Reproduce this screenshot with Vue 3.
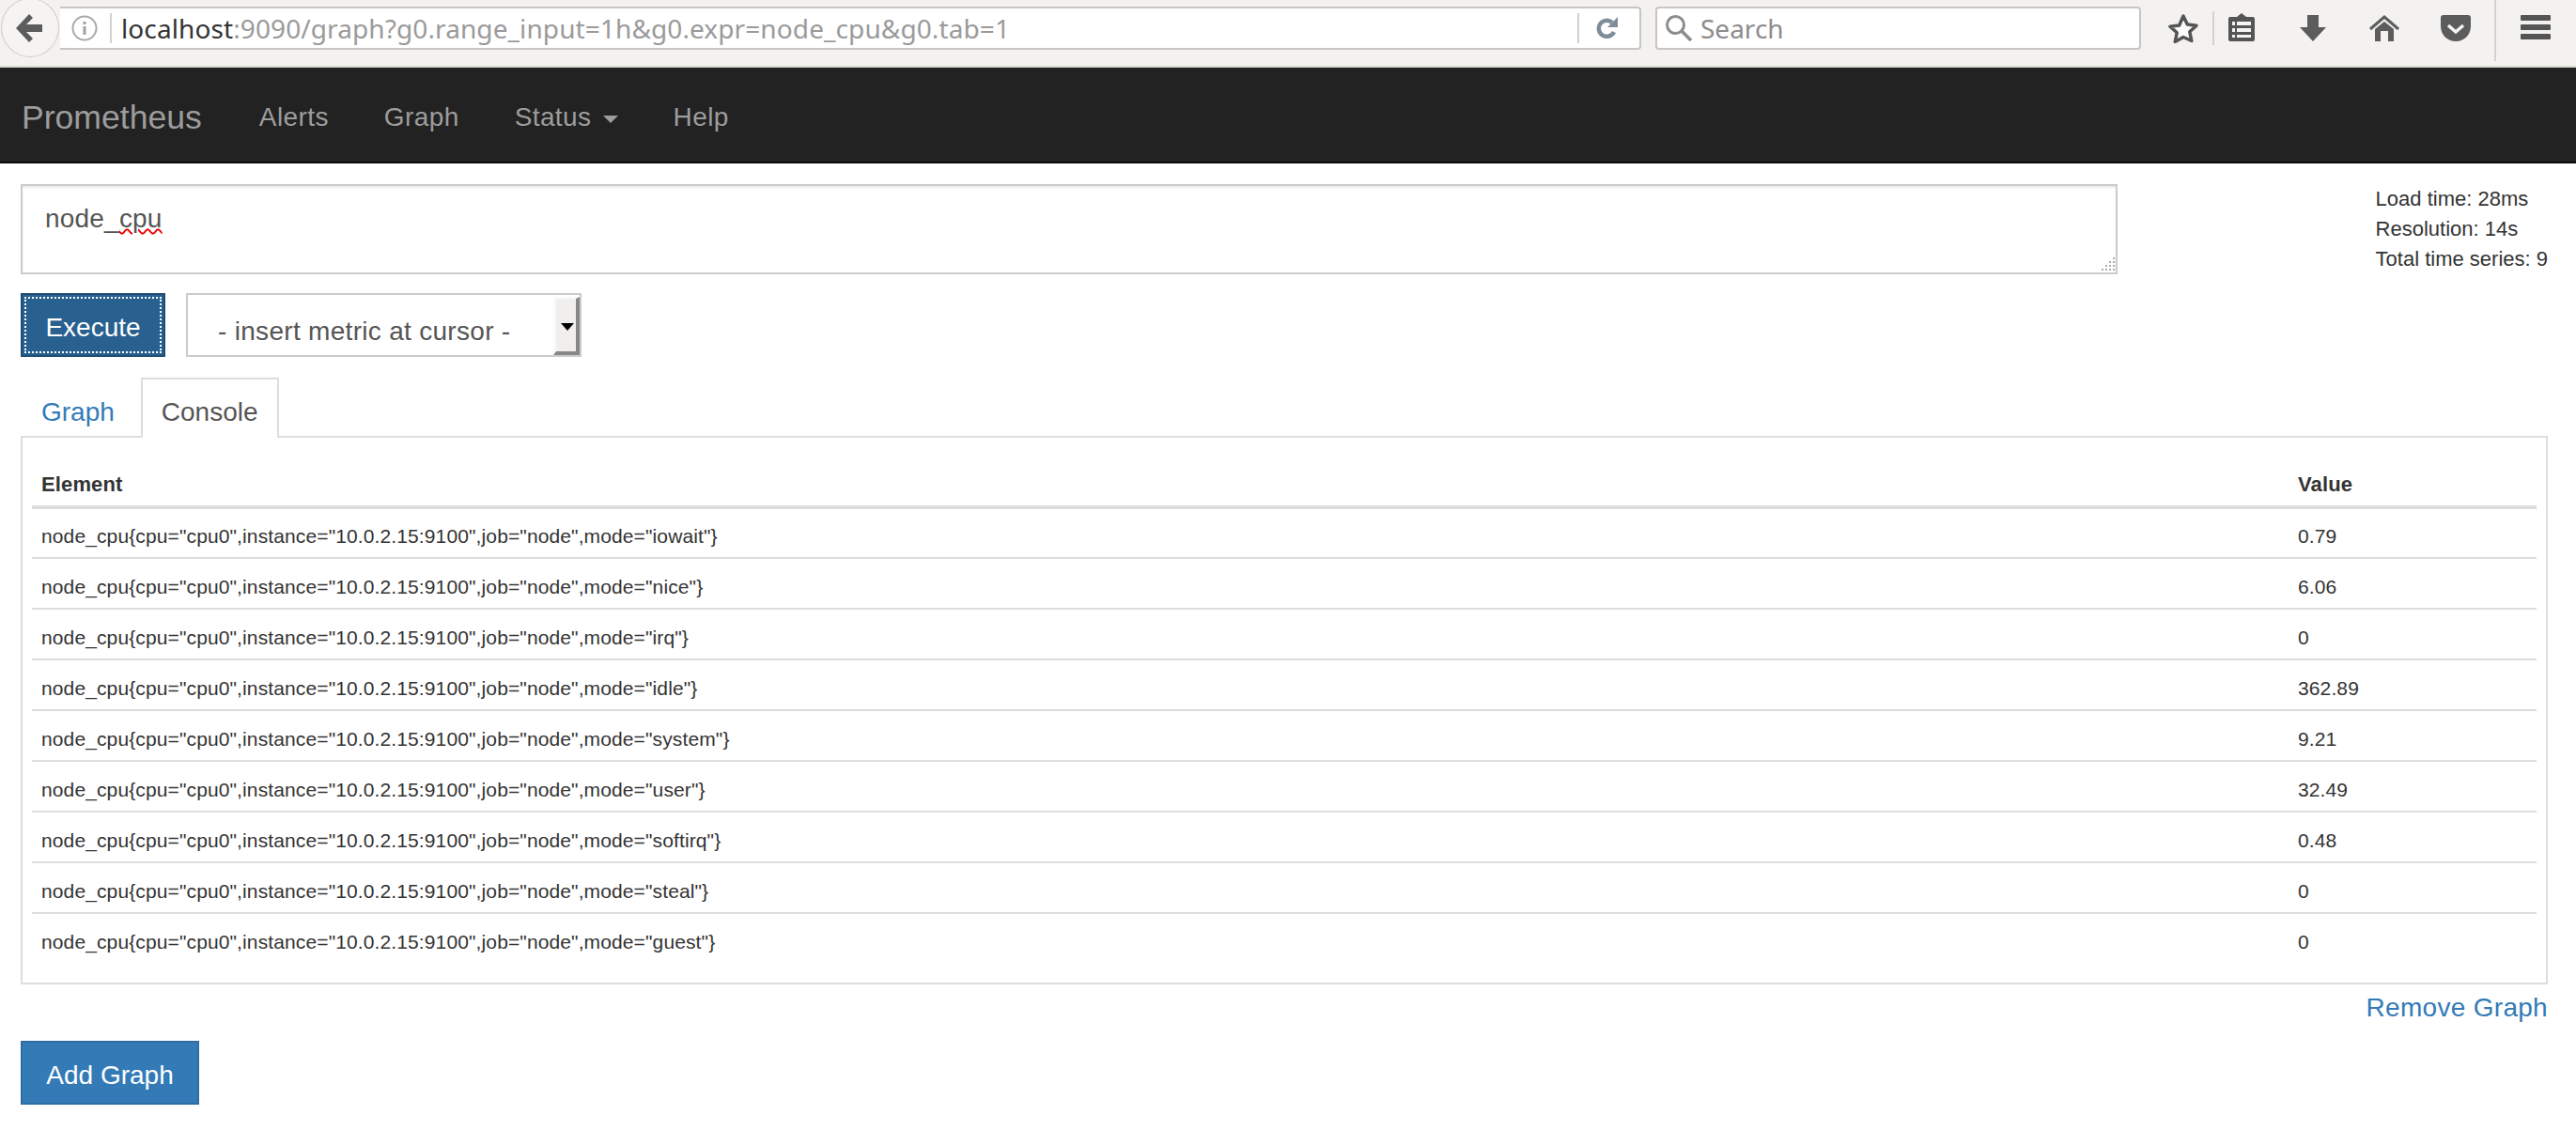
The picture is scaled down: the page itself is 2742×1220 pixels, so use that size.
<script setup>
const modes = [
  ['iowait', '0.79'], ['nice', '6.06'], ['irq', '0'], ['idle', '362.89'], ['system', '9.21'],
  ['user', '32.49'], ['softirq', '0.48'], ['steal', '0'], ['guest', '0']
]
const rows = modes.map(([mode, value]) => ({
  element: `node_cpu{cpu="cpu0",instance="10.0.2.15:9100",job="node",mode="${mode}"}`,
  value
}))
</script>

<template>
  <div class="page">
    <header class="toolbar">
      <div class="back">
        <svg width="28" height="30" viewBox="0 0 28 30"><path d="M14 0l4 4-7 7h17v8H11l7 7-4 4L0 15z" fill="#5c5c5c"/></svg>
      </div>
      <div class="urlbar">
        <svg class="info" width="28" height="28" viewBox="0 0 28 28">
          <circle cx="14" cy="14" r="12.5" fill="none" stroke="#a8a8a8" stroke-width="2"/>
          <rect x="12.5" y="12" width="3" height="9" fill="#a0a0a0"/>
          <rect x="12.5" y="7" width="3" height="3" fill="#a0a0a0"/>
        </svg>
        <span class="urlsep"></span>
        <span class="url"><span class="host">localhost</span>:9090/graph?g0.range_input=1h&amp;g0.expr=node_cpu&amp;g0.tab=1</span>
        <span class="urlsep end"></span>
        <svg class="reload" width="24" height="26" viewBox="0 0 24 26">
          <path d="M19 17a8.500 8.500 0 1 1-2-10" fill="none" stroke="#7f8c99" stroke-width="4.500"/>
          <path d="M23 1v11H12z" fill="#7f8c99"/>
        </svg>
      </div>
      <div class="searchbar">
        <svg width="30" height="30" viewBox="0 0 30 30">
          <circle cx="11.500" cy="11.500" r="9" fill="none" stroke="#8d8d8d" stroke-width="3"/>
          <path d="M18 18l10 10" stroke="#8d8d8d" stroke-width="3.500"/>
        </svg>
        <span class="search-text">Search</span>
      </div>
      <svg class="ti star" width="34" height="32" viewBox="0 0 34 32">
        <path d="M17 3l4.300 9 9.700 1.200-7.200 6.600 2 9.700L17 25.500 8.200 30.500l2-9.700L3 14.200 12.700 13z" fill="#fbfbfa" stroke="#555" stroke-width="3.500" stroke-linejoin="round"/>
      </svg>
      <span class="tsep"></span>
      <svg class="ti clip" width="28" height="30" viewBox="0 0 28 30">
        <path d="M2 4h7l5-4 5 4h7a2 2 0 0 1 2 2v22a2 2 0 0 1-2 2H2a2 2 0 0 1-2-2V6a2 2 0 0 1 2-2z" fill="#555"/>
        <path d="M9 9h15v4H9zM9 16h15v4H9zM9 23h15v3H9zM4 9h3v4H4zM4 16h3v4H4zM4 23h3v3H4z" fill="#f5f4f2"/>
      </svg>
      <svg class="ti down" width="28" height="28" viewBox="0 0 28 28"><path d="M8 0h12v13h8L14 28 0 13h8z" fill="#5c5c5c"/></svg>
      <svg class="ti home" width="32" height="28" viewBox="0 0 32 28">
        <path d="M1 15L16 2l15 13" fill="none" stroke="#5c5c5c" stroke-width="3"/>
        <path d="M6 28V15L16 7l10 8v13h-6V17h-8v11z" fill="#5c5c5c"/>
      </svg>
      <svg class="ti pocket" width="32" height="28" viewBox="0 0 32 28">
        <path d="M3 0h26a3 3 0 0 1 3 3v9c0 9-7 16-16 16S0 21 0 12V3a3 3 0 0 1 3-3z" fill="#5c5c5c"/>
        <path d="M8 11l8 7 8-7" fill="none" stroke="#f5f4f2" stroke-width="3.500"/>
      </svg>
      <span class="tsep tall"></span>
      <div class="burger"><i></i><i></i><i></i></div>
    </header>

    <nav class="navbar">
      <a class="brand">Prometheus</a>
      <a class="nav-link">Alerts</a>
      <a class="nav-link">Graph</a>
      <a class="nav-link">Status <b class="caret"></b></a>
      <a class="nav-link">Help</a>
    </nav>

    <main class="content">
      <section class="query">
        <div class="expr">
          node_<span class="spell">cpu</span>
          <svg class="grip" width="18" height="18" viewBox="0 0 18 18" fill="#aaa">
            <rect x="15" y="2" width="2" height="2"/><rect x="11" y="6" width="2" height="2"/><rect x="15" y="6" width="2" height="2"/>
            <rect x="7" y="10" width="2" height="2"/><rect x="11" y="10" width="2" height="2"/><rect x="15" y="10" width="2" height="2"/>
            <rect x="3" y="14" width="2" height="2"/><rect x="7" y="14" width="2" height="2"/><rect x="11" y="14" width="2" height="2"/><rect x="15" y="14" width="2" height="2"/>
          </svg>
        </div>
        <div class="stats">
          <div>Load time: 28ms</div>
          <div>Resolution: 14s</div>
          <div>Total time series: 9</div>
        </div>
      </section>

      <section class="controls">
        <button class="btn execute"><span class="focus">Execute</span></button>
        <div class="select">
          <span class="select-label">- insert metric at cursor -</span>
          <span class="select-arrow"></span>
        </div>
      </section>

      <ul class="tabs">
        <li class="tab">Graph</li>
        <li class="tab active">Console</li>
      </ul>
      <div class="panel">
        <table class="results">
          <thead>
            <tr><th>Element</th><th class="val">Value</th></tr>
          </thead>
          <tbody>
            <tr v-for="row in rows" :key="row.element">
              <td>{{ row.element }}</td>
              <td class="val">{{ row.value }}</td>
            </tr>
          </tbody>
        </table>
      </div>
      <div class="remove-row"><a class="remove">Remove Graph</a></div>
      <button class="btn add">Add Graph</button>
    </main>
  </div>
</template>

<style scoped>
.page {
  height: 1220px;
  overflow: hidden;
  background: #fff;
  color: #333;
  font-family: "Liberation Sans", Arial, sans-serif;
  font-size: 28px;
}
.toolbar {
  position: relative;
  height: 63px;
  padding: 7px 0 0 64px;
  display: flex;
  align-items: flex-start;
  background: #f3f2f0;
  border-bottom: 2px solid #dad7d2;
}
.back {
  position: absolute;
  left: 1px;
  top: -2px;
  width: 62px;
  height: 63px;
  border-radius: 50%;
  border: 1px solid #cfccc8;
  background: #f5f4f2;
  display: flex;
  align-items: center;
  justify-content: center;
  padding-right: 2px;
  box-sizing: border-box;
  z-index: 1;
}
.urlbar {
  width: 1683px;
  height: 46px;
  box-sizing: border-box;
  background: #fff;
  border: 2px solid #c9c5c0;
  border-left: 0;
  border-radius: 0 4px 4px 0;
  display: flex;
  align-items: center;
  font-family: "Noto Sans", sans-serif;
}
.info { margin-left: 12px; }
.urlsep {
  width: 2px;
  height: 32px;
  margin: 0 10px 0 13px;
  background: #d4d1cd;
  flex: none;
}
.urlsep.end { margin: 0 0 0 auto; }
.reload { margin: 0 22px 0 18px; }
.url {
  font-size: 28px;
  letter-spacing: .1px;
  color: #9a9a9a;
  white-space: nowrap;
}
.host { color: #333; }
.searchbar {
  margin-left: 15px;
  width: 517px;
  height: 46px;
  box-sizing: border-box;
  background: #fff;
  border: 2px solid #c9c5c0;
  border-radius: 4px;
  display: flex;
  align-items: center;
  padding-left: 8px;
  font-family: "Noto Sans", sans-serif;
}
.search-text {
  margin-left: 8px;
  font-size: 28px;
  color: #8c8c8c;
}
.ti { flex: none; }
.star { margin: 7px 0 0 28px; }
.tsep {
  flex: none;
  width: 2px;
  height: 36px;
  margin: 5px 0 0 14px;
  background: #d4d1cd;
}
.tall { height: 65px; margin: -7px 0 0 25px; }
.clip { margin: 7px 0 0 15px; }
.down { margin: 9px 0 0 48px; }
.home { margin: 9px 0 0 46px; }
.pocket { margin: 9px 0 0 44px; }
.burger {
  margin: 9px 0 0 26px;
  width: 32px;
  height: 26px;
  display: flex;
  flex-direction: column;
  justify-content: space-between;
}
.burger i {
  height: 6px;
  border-radius: 1px;
  background: #555;
}
.navbar {
  height: 100px;
  background: #222;
  border-bottom: 2px solid #080808;
  display: flex;
  align-items: center;
  padding-left: 23px;
  color: #9d9d9d;
}
.brand { font-size: 35.6px; margin: 6px 61px 0 0; }
.nav-link { margin: 6px 59px 0 0; letter-spacing: .4px; }
.caret {
  display: inline-block;
  width: 0;
  height: 0;
  margin-left: 4px;
  vertical-align: middle;
  border-top: 8px solid #9d9d9d;
  border-left: 8px solid transparent;
  border-right: 8px solid transparent;
}
.content { padding: 22px 30px 0 22px; }
.query {
  display: flex;
  align-items: flex-start;
  justify-content: space-between;
}
.expr {
  position: relative;
  width: 2232px;
  height: 96px;
  box-sizing: border-box;
  border: 2px solid #ccc;
  padding: 15px 24px 0;
  line-height: 40px;
  letter-spacing: .2px;
  color: #555;
  box-shadow: inset 0 2px 2px rgba(0, 0, 0, .075);
}
.spell { text-decoration: underline wavy #e00; text-decoration-thickness: 2px; }
.grip { position: absolute; right: 0; bottom: 0; }
.stats {
  font-size: 22px;
  line-height: 32px;
  white-space: nowrap;
}
.controls {
  display: flex;
  gap: 22px;
  margin-top: 20px;
  height: 68px;
}
.btn {
  height: 68px;
  padding: 0;
  color: #fff;
  font: inherit;
  border: 2px solid #2e6da4;
  background: #337ab7;
  box-sizing: border-box;
}
.execute {
  width: 154px;
  background: #286090;
  border-color: #204d74;
  padding: 2px;
}
.focus {
  display: flex;
  align-items: center;
  justify-content: center;
  height: 100%;
  box-sizing: border-box;
  border: 2px dotted #fff;
  padding-top: 6px;
}
.select {
  position: relative;
  width: 421px;
  height: 68px;
  box-sizing: border-box;
  border: 2px solid #ccc;
  padding: 9px 0 0 32px;
  color: #555;
  line-height: 60px;
  letter-spacing: .3px;
}
.select-arrow {
  position: absolute;
  right: 0;
  top: 2px;
  width: 28px;
  height: 62px;
  box-sizing: border-box;
  background: #f0efee;
  border-left: 3px solid #fafafa;
  border-top: 2px solid #fafafa;
  border-right: 4px solid #888;
  border-bottom: 4px solid #888;
}
.select-arrow::after {
  content: "";
  position: absolute;
  left: 5px;
  top: 26px;
  border-top: 8px solid #000;
  border-left: 7px solid transparent;
  border-right: 7px solid transparent;
}
.tabs {
  list-style: none;
  display: flex;
  margin: 22px 0 0;
  padding: 0;
  height: 62px;
  position: relative;
  z-index: 1;
}
.tab {
  height: 64px;
  box-sizing: border-box;
  padding: 0 20px;
  margin-right: 6px;
  line-height: 70px;
  color: #337ab7;
  border: 2px solid transparent;
  border-bottom: 0;
}
.tab.active {
  color: #555;
  background: #fff;
  border-color: #ddd;
}
.panel {
  width: 2690px;
  height: 584px;
  box-sizing: border-box;
  border: 2px solid #ddd;
  padding: 20px 10px 0;
}
.results {
  width: 100%;
  border-collapse: collapse;
  font-size: 21px;
  letter-spacing: .12px;
  table-layout: fixed;
}
.results th {
  height: 54px;
  padding: 8px 10px 0;
  box-sizing: border-box;
  text-align: left;
  border-bottom: 4px solid #ddd;
  font-size: 22px;
}
.results td {
  height: 54px;
  padding: 7px 10px 0;
  box-sizing: border-box;
  border-top: 2px solid #ddd;
  white-space: nowrap;
}
.results tbody tr:first-child td { border-top: 0; }
.val { width: 264px; }
.remove-row {
  display: flex;
  justify-content: flex-end;
  margin-top: 8px;
  height: 52px;
  color: #337ab7;
  line-height: 34px;
  letter-spacing: .3px;
}
.add { display: block; width: 190px; padding-top: 6px; }
</style>

<style>
html, body { margin: 0; background: #fff; }
</style>
